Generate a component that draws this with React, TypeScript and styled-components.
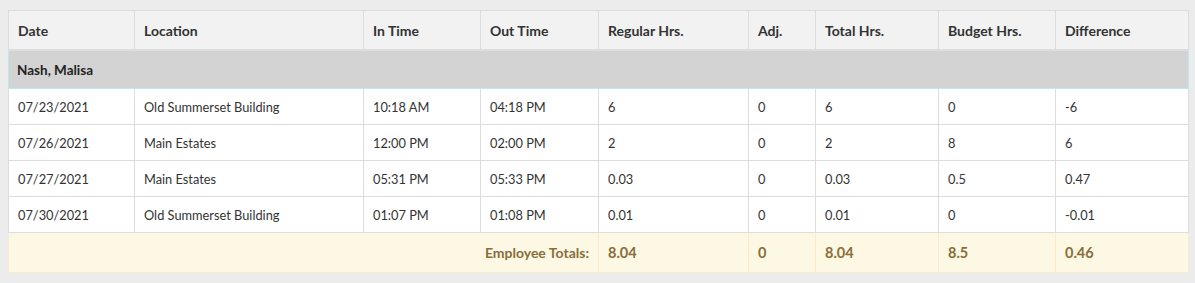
import React from 'react'
import styled, { createGlobalStyle } from 'styled-components'

const GlobalStyle = createGlobalStyle`
  body {
    margin: 0;
    background: #ececec;
    font-family: Lato, "Open Sans", sans-serif;
  }
`

const Wrapper = styled.div`
  padding: 10px 7px 10px 8px;
`

const Table = styled.table`
  width: 1180px;
  border-collapse: collapse;
  table-layout: fixed;
  background: #fff;
  font-size: 12.8px;
  color: #333;
`

const HeadCell = styled.th`
  background: #f2f2f2;
  border: 1px solid #dddddd;
  border-bottom-width: 2px;
  height: 37px;
  padding: 1px 9px 0;
  text-align: left;
  font-weight: 700;
  font-size: 14px;
  color: #333;
`

const GroupCell = styled.td`
  background: #d3d3d3;
  border: 1px solid #bce8f1;
  border-top: none;
  height: 37px;
  padding: 0 8px;
  font-weight: 700;
  font-size: 13.5px;
  color: #222;
`

const Cell = styled.td`
  border: 1px solid #dddddd;
  height: 35px;
  padding: 0 9px;
  white-space: nowrap;
`

const TotalCell = styled.td<{ $label?: boolean }>`
  background: #fcf8e3;
  border: 1px solid #faebcc;
  height: 39px;
  padding: 0 9px;
  font-weight: 700;
  color: #8a6d3b;
  font-size: ${(p) => (p.$label ? '14px' : '14.5px')};
  text-align: ${(p) => (p.$label ? 'right' : 'left')};
`

const widths = [126, 229, 117, 118, 150, 67, 123, 117, 133]
const headers = ['Date', 'Location', 'In Time', 'Out Time', 'Regular Hrs.', 'Adj.', 'Total Hrs.', 'Budget Hrs.', 'Difference']

const rows = [
  ['07/23/2021', 'Old Summerset Building', '10:18 AM', '04:18 PM', '6', '0', '6', '0', '-6'],
  ['07/26/2021', 'Main Estates', '12:00 PM', '02:00 PM', '2', '0', '2', '8', '6'],
  ['07/27/2021', 'Main Estates', '05:31 PM', '05:33 PM', '0.03', '0', '0.03', '0.5', '0.47'],
  ['07/30/2021', 'Old Summerset Building', '01:07 PM', '01:08 PM', '0.01', '0', '0.01', '0', '-0.01'],
]

const totals = ['8.04', '0', '8.04', '8.5', '0.46']

export default function App() {
  return (
    <Wrapper>
      <GlobalStyle />
      <Table>
        <colgroup>
          {widths.map((w, i) => <col key={i} style={{ width: w }} />)}
        </colgroup>
        <thead>
          <tr>
            {headers.map((h) => <HeadCell key={h}>{h}</HeadCell>)}
          </tr>
        </thead>
        <tbody>
          <tr>
            <GroupCell colSpan={9}>Nash, Malisa</GroupCell>
          </tr>
          {rows.map((r, i) => (
            <tr key={i}>
              {r.map((c, j) => <Cell key={j}>{c}</Cell>)}
            </tr>
          ))}
          <tr>
            <TotalCell $label colSpan={4}>Employee Totals:</TotalCell>
            {totals.map((t, i) => <TotalCell key={i}>{t}</TotalCell>)}
          </tr>
        </tbody>
      </Table>
    </Wrapper>
  )
}
